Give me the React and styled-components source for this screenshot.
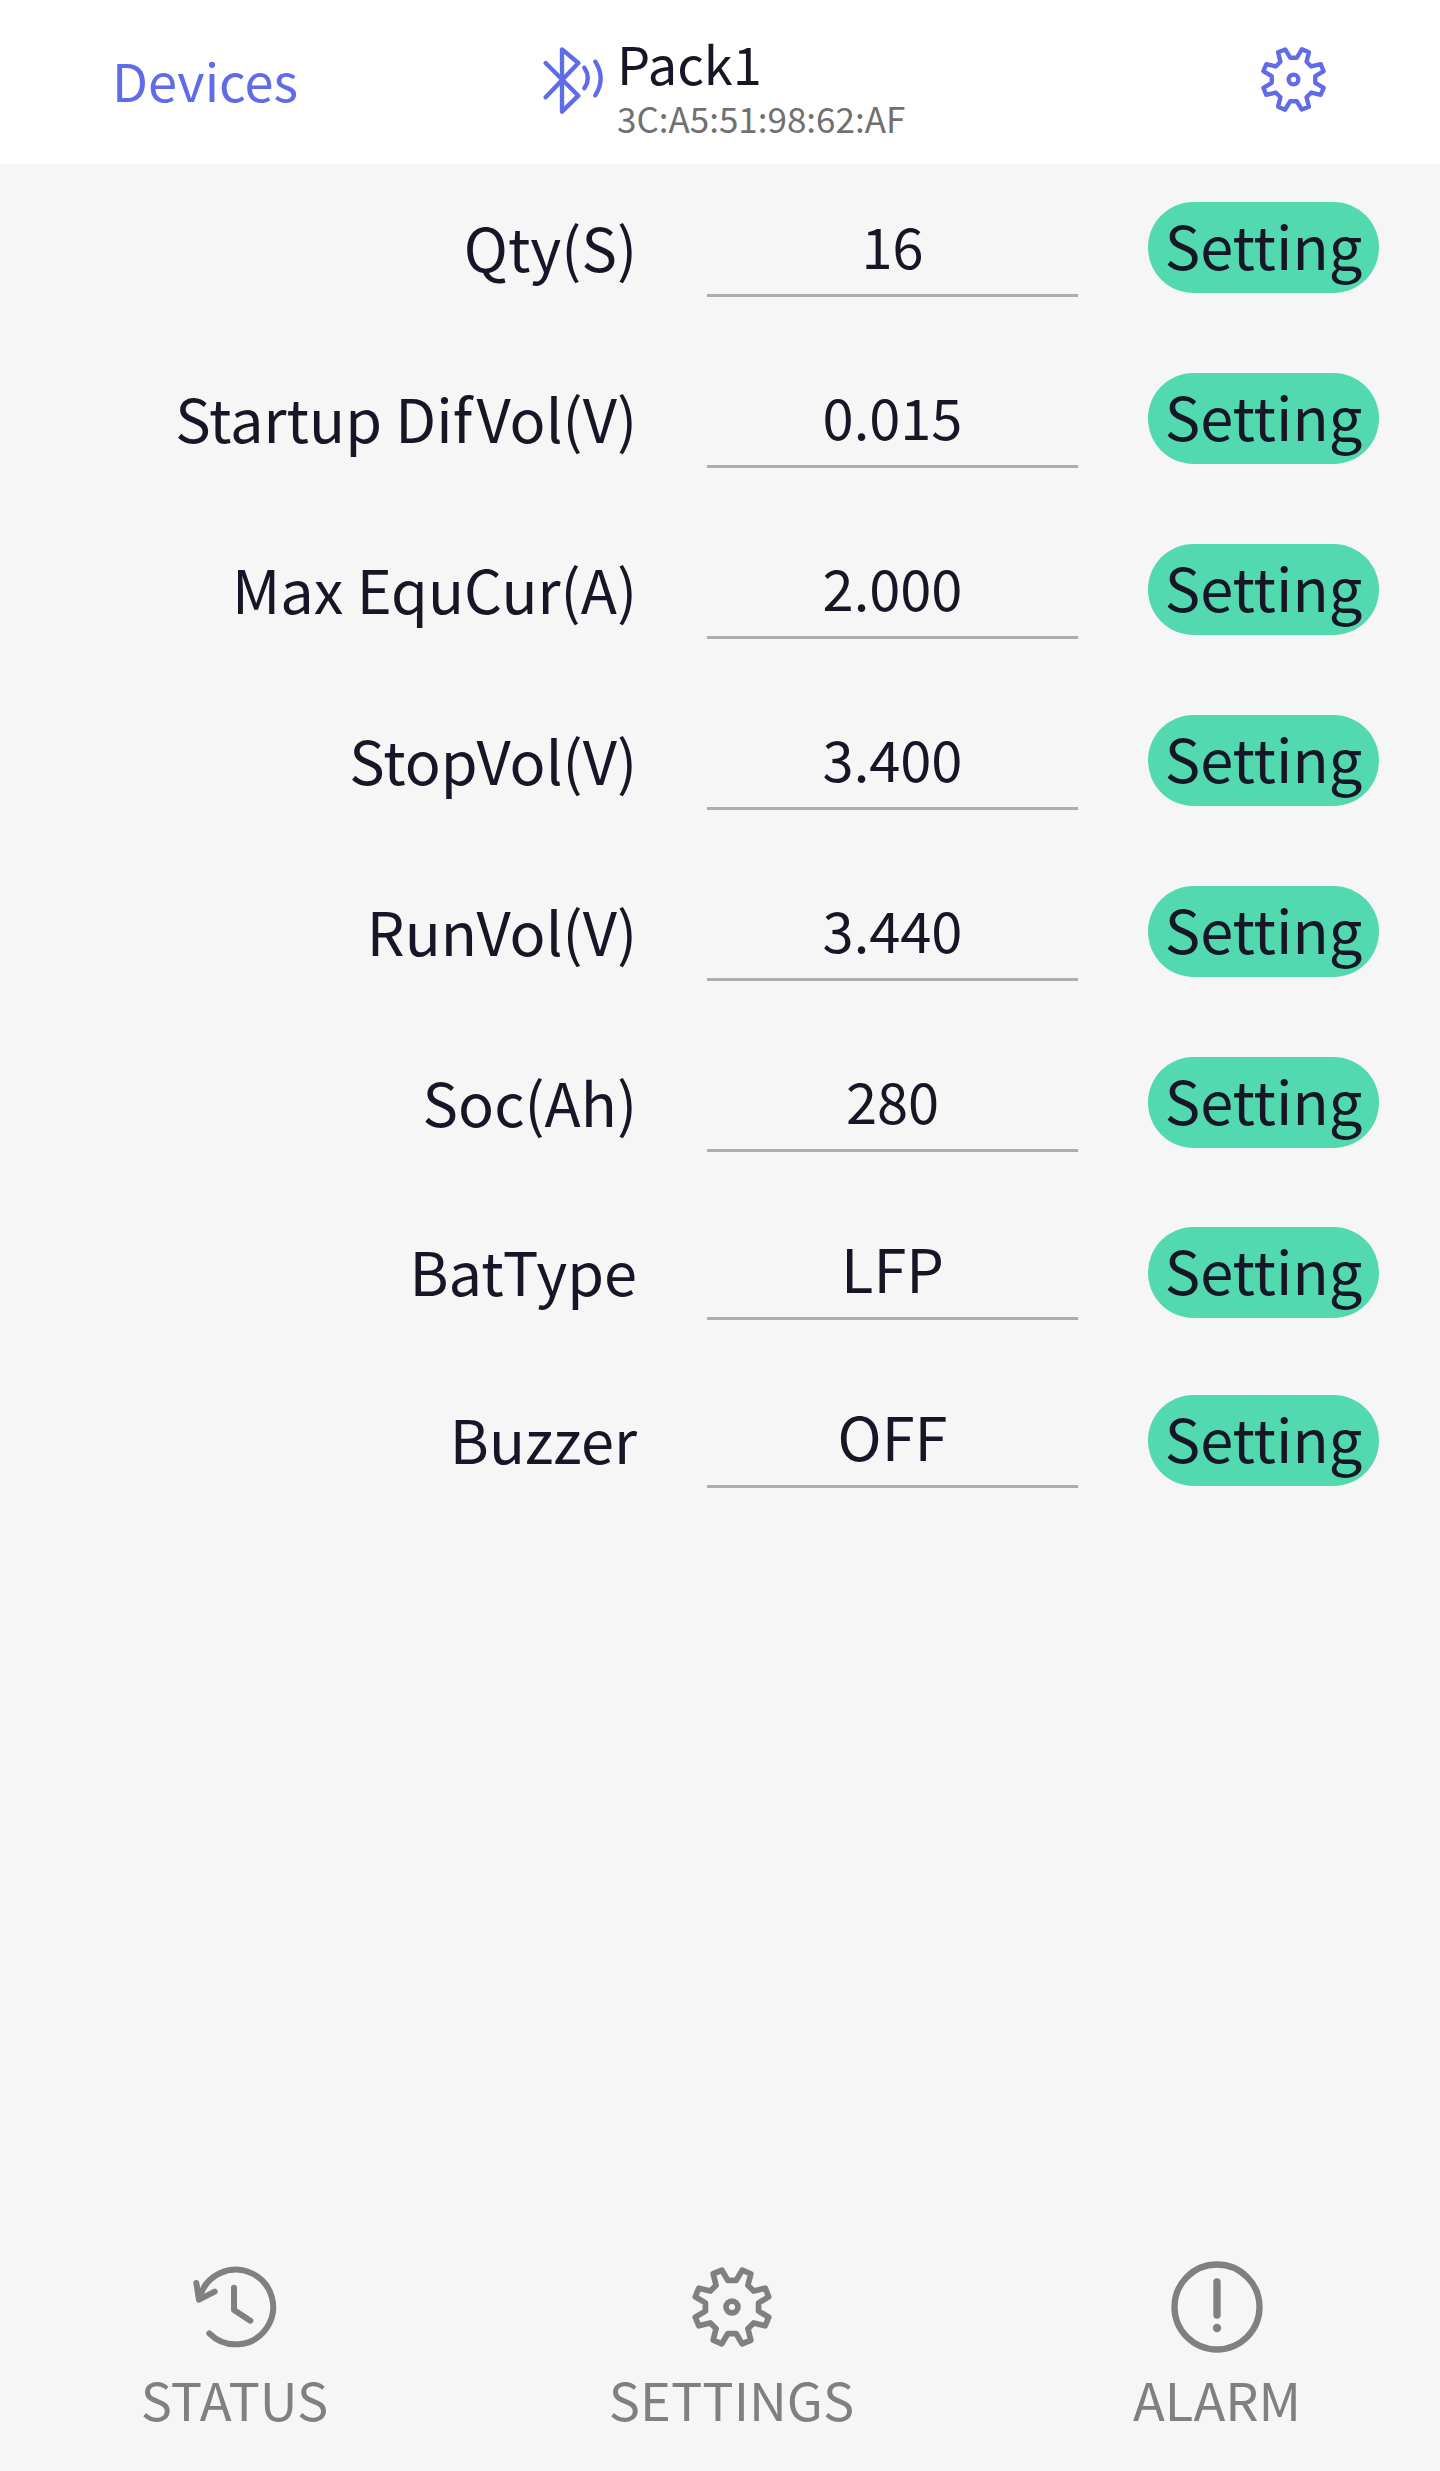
import React from 'react'
import styled, { createGlobalStyle } from 'styled-components'

const GlobalStyle = createGlobalStyle`
    * {
        box-sizing: border-box;
    }

    body {
        margin: 0;
        background-color: #f6f6f6;
        color: #161626;
        font-family: 'Noto Sans CJK SC', 'Noto Sans', sans-serif;
    }
`

const Screen = styled.div`
    display: flex;
    flex-direction: column;
    width: 1440px;
    height: 2471px;
`

const Header = styled.header`
    display: grid;
    grid-template-columns: 431px 1fr auto;
    align-items: start;
    height: 164px;
    padding: 0 113px 0 112px;
    background-color: white;
    color: #5f6be8;
`

const BackLink = styled.a`
    padding-top: 41px;
    font-size: 52.4px;
    line-height: 77px;
`

const Device = styled.div`
    display: flex;
    align-items: flex-start;
    column-gap: 14px;
    padding-top: 25px;

    & svg {
        margin-top: 22px;
    }
`

const DeviceName = styled.div`
    color: #161626;
    font-size: 52.4px;
    line-height: 75px;
`

const DeviceAddress = styled.div`
    color: #707070;
    font-size: 35px;
    line-height: 35px;
`

const HeaderAction = styled.div`
    display: flex;
    padding-top: 46px;
`

const SettingList = styled.main`
    flex: 1;
    padding-top: 38px;
`

const SettingRow = styled.div`
    display: grid;
    grid-template-columns: 637px 371px 231px;
    column-gap: 70px;
    align-items: start;
    height: ${({ $height }) => $height}px;
`

const Label = styled.div`
    text-align: right;
    font-size: 59.5px;
    line-height: ${({ $select }) => ($select ? '86px' : '88px')};
`

const Value = styled.div`
    height: ${({ $select }) => ($select ? '93px' : '95px')};
    border-bottom: 3px solid #adadad;
    text-align: center;
    font-size: ${({ $select }) => ($select ? '59.5px' : '56px')};
    line-height: ${({ $select }) => ($select ? '80px' : '86px')};
`

const SettingButton = styled.button`
    height: 91px;
    border: none;
    border-radius: 46px;
    padding: 0 0 7px;
    background-color: #53d9b0;
    color: inherit;
    font-family: inherit;
    font-size: 59.5px;
    line-height: 84px;
`

const TabBar = styled.nav`
    display: grid;
    grid-template-columns: 469px 525px 446px;
    padding-bottom: 35px;
`

const Tab = styled.a`
    display: flex;
    flex-direction: column;
    align-items: center;
    row-gap: 7px;
    color: #808080;
    font-size: 52.4px;
    line-height: 76px;
`

const Icon = styled.svg`
    display: block;
    flex: none;
    fill: none;
    stroke: currentColor;
    stroke-linecap: round;
    stroke-linejoin: round;
`

// one eighth of the outline, turned round the centre
const gearTooth = [[-10, -65], [10, -65], [25, -90], [46, -81]]

const gearPoints = Array.from({ length: 8 }, (_, i) => {
    const cos = Math.cos((i * Math.PI) / 4)
    const sin = Math.sin((i * Math.PI) / 4)
    return gearTooth.map(([x, y]) => `${(x * cos - y * sin).toFixed(1)},${(x * sin + y * cos).toFixed(1)}`).join(' ')
}).join(' ')

const GearShape = () => (
    <>
        <polygon points={gearPoints} />
        <circle r='14.5' />
    </>
)

const BluetoothIcon = () => (
    <Icon width='60' height='68' viewBox='129 81 180 204' strokeWidth='13'>
        <path d='M137 129L235 227L186 275V88L235 129L137 232' />
        <path d='M253 143Q274 174 253 205' />
        <path d='M286 125Q318 176 286 226' />
    </Icon>
)

const HistoryIcon = () => (
    <Icon width='92' height='92' viewBox='-138 -138 276 276' strokeWidth='18'>
        <path d='M-77 79A112 112 0 1 0 -106 -28' />
        <path d='M-116 -72L-108 -22L-61 -46M-3 -58V9L46 41' />
    </Icon>
)

const SettingsIcon = () => (
    <Icon width='92' height='92' viewBox='-112.5 -112.5 225 225' strokeWidth='14'>
        <GearShape />
    </Icon>
)

const AlarmIcon = () => (
    <Icon width='92' height='92' viewBox='-138 -138 276 276' strokeWidth='19'>
        <circle r='127.5' />
        <path d='M0 -75V24' strokeWidth='22' />
        <path d='M0 63V63.01' strokeWidth='25' />
    </Icon>
)

const settings = [
    { label: 'Qty(S)', value: '16' },
    { label: 'Startup DifVol(V)', value: '0.015' },
    { label: 'Max EquCur(A)', value: '2.000' },
    { label: 'StopVol(V)', value: '3.400' },
    { label: 'RunVol(V)', value: '3.440' },
    { label: 'Soc(Ah)', value: '280', height: 170 },
    { label: 'BatType', value: 'LFP', height: 168, select: true },
    { label: 'Buzzer', value: 'OFF', height: 168, select: true }
]

const App = () => (
    <Screen>
        <GlobalStyle />
        <Header>
            <BackLink>Devices</BackLink>
            <Device>
                <BluetoothIcon />
                <div>
                    <DeviceName>Pack1</DeviceName>
                    <DeviceAddress>3C:A5:51:98:62:AF</DeviceAddress>
                </div>
            </Device>
            <HeaderAction>
                <Icon width='67' height='67' viewBox='-100 -100 200 200' strokeWidth='13'>
                    <GearShape />
                </Icon>
            </HeaderAction>
        </Header>
        <SettingList>
            {settings.map(({ label, value, height = 171, select }) => (
                <SettingRow key={label} $height={height}>
                    <Label $select={select}>{label}</Label>
                    <Value $select={select}>{value}</Value>
                    <SettingButton>Setting</SettingButton>
                </SettingRow>
            ))}
        </SettingList>
        <TabBar>
            <Tab><HistoryIcon />STATUS</Tab>
            <Tab><SettingsIcon />SETTINGS</Tab>
            <Tab><AlarmIcon />ALARM</Tab>
        </TabBar>
    </Screen>
)

export default App
